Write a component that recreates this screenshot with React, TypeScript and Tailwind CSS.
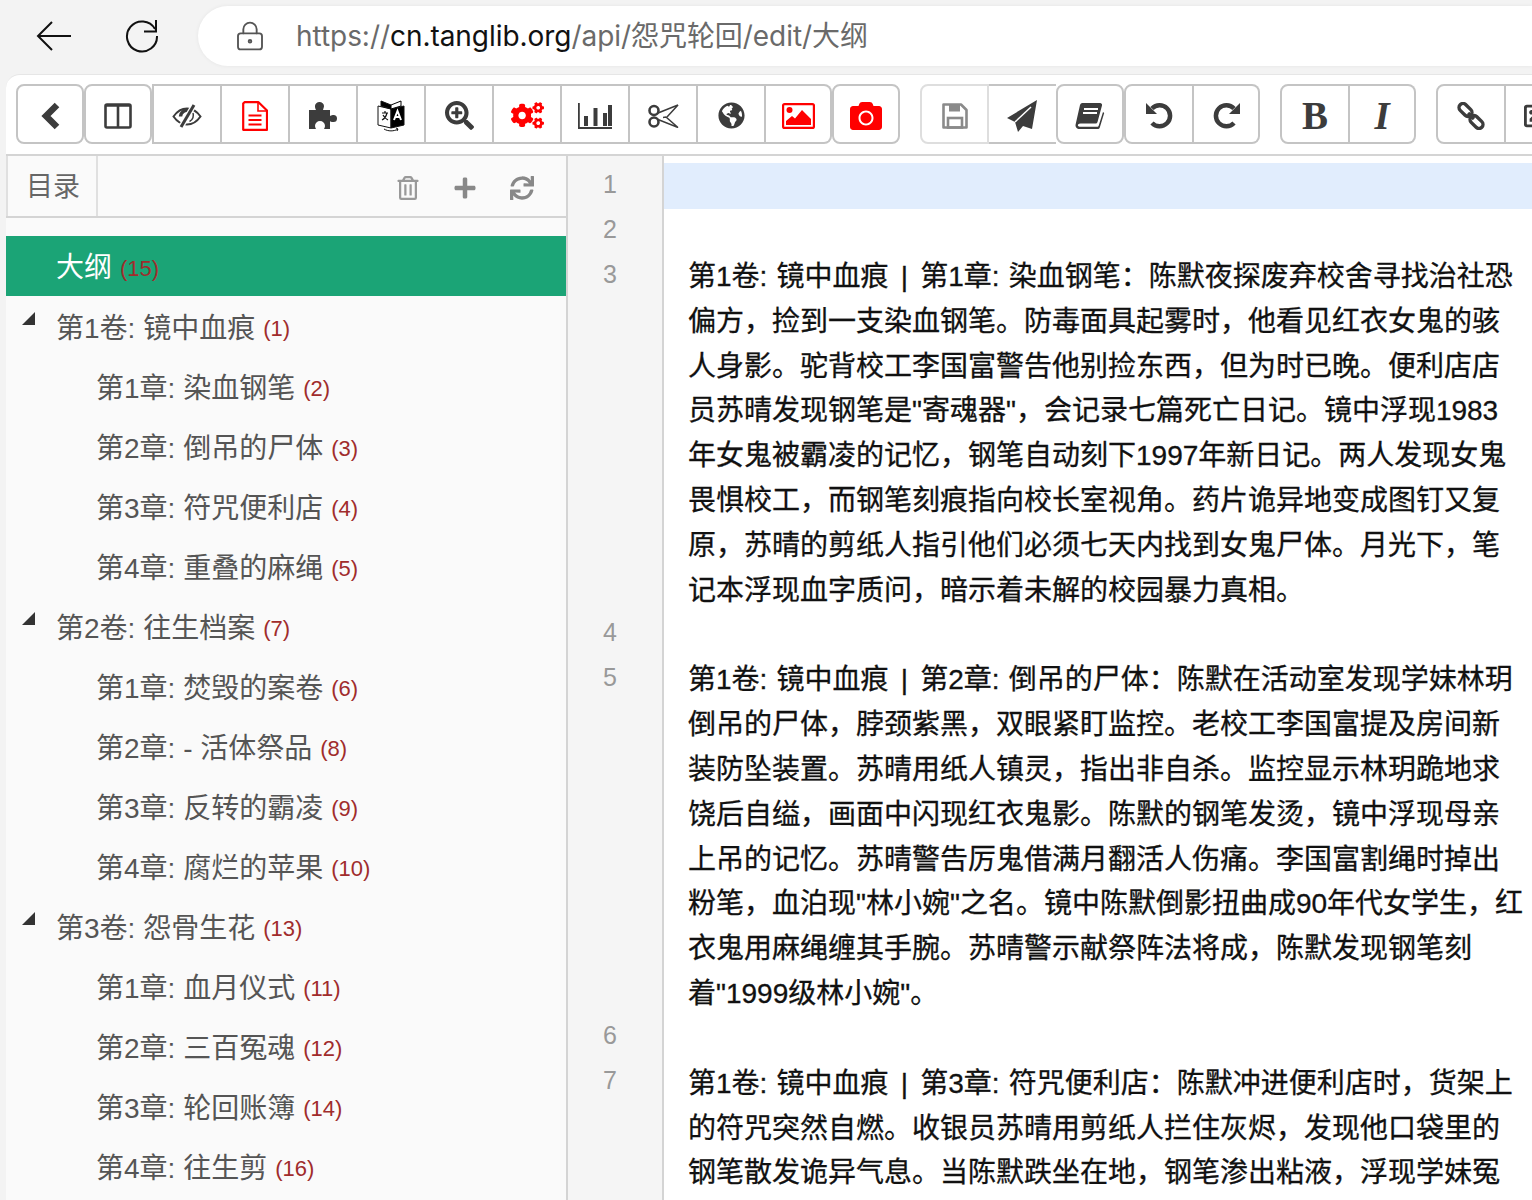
import { LockKeyhole } from "lucide-react";
import {
  FaPlus,
  FaSync,
  FaRegTrashAlt,
  FaSearchPlus,
  FaCogs,
  FaGlobeAmericas,
  FaCamera,
  FaRegImage,
} from "react-icons/fa";
import type { ReactNode } from "react";

const sans = "font-['Liberation_Sans','Noto_Sans_CJK_SC',sans-serif]";
const countCls = "ml-[8px] text-[22px] text-[#a02c2c]";

const tree = [
  { label: "第1卷: 镜中血痕", n: 1, level: 1 },
  { label: "第1章: 染血钢笔", n: 2, level: 2 },
  { label: "第2章: 倒吊的尸体", n: 3, level: 2 },
  { label: "第3章: 符咒便利店", n: 4, level: 2 },
  { label: "第4章: 重叠的麻绳", n: 5, level: 2 },
  { label: "第2卷: 往生档案", n: 7, level: 1 },
  { label: "第1章: 焚毁的案卷", n: 6, level: 2 },
  { label: "第2章: - 活体祭品", n: 8, level: 2 },
  { label: "第3章: 反转的霸凌", n: 9, level: 2 },
  { label: "第4章: 腐烂的苹果", n: 10, level: 2 },
  { label: "第3卷: 怨骨生花", n: 13, level: 1 },
  { label: "第1章: 血月仪式", n: 11, level: 2 },
  { label: "第2章: 三百冤魂", n: 12, level: 2 },
  { label: "第3章: 轮回账簿", n: 14, level: 2 },
  { label: "第4章: 往生剪", n: 16, level: 2 },
];

// each block: gutter numbers on the left, wrapped lines on the right
const paragraphs = [
  [
    "第1卷: 镜中血痕 | 第1章: 染血钢笔：陈默夜探废弃校舍寻找治社恐",
    "偏方，捡到一支染血钢笔。防毒面具起雾时，他看见红衣女鬼的骇",
    "人身影。驼背校工李国富警告他别捡东西，但为时已晚。便利店店",
    "员苏晴发现钢笔是\"寄魂器\"，会记录七篇死亡日记。镜中浮现1983",
    "年女鬼被霸凌的记忆，钢笔自动刻下1997年新日记。两人发现女鬼",
    "畏惧校工，而钢笔刻痕指向校长室视角。药片诡异地变成图钉又复",
    "原，苏晴的剪纸人指引他们必须七天内找到女鬼尸体。月光下，笔",
    "记本浮现血字质问，暗示着未解的校园暴力真相。",
  ],
  [
    "第1卷: 镜中血痕 | 第2章: 倒吊的尸体：陈默在活动室发现学妹林玥",
    "倒吊的尸体，脖颈紫黑，双眼紧盯监控。老校工李国富提及房间新",
    "装防坠装置。苏晴用纸人镇灵，指出非自杀。监控显示林玥跪地求",
    "饶后自缢，画面中闪现红衣鬼影。陈默的钢笔发烫，镜中浮现母亲",
    "上吊的记忆。苏晴警告厉鬼借满月翻活人伤痛。李国富割绳时掉出",
    "粉笔，血泊现\"林小婉\"之名。镜中陈默倒影扭曲成90年代女学生，红",
    "衣鬼用麻绳缠其手腕。苏晴警示献祭阵法将成，陈默发现钢笔刻",
    "着\"1999级林小婉\"。",
  ],
  [
    "第1卷: 镜中血痕 | 第3章: 符咒便利店：陈默冲进便利店时，货架上",
    "的符咒突然自燃。收银员苏晴用剪纸人拦住灰烬，发现他口袋里的",
    "钢笔散发诡异气息。当陈默跌坐在地，钢笔渗出粘液，浮现学妹冤",
  ],
];

function Btn({ children, className = "w-[68px]" }: { children: ReactNode; className?: string }) {
  return (
    <div className={`h-[60px] shrink-0 flex items-center justify-center pt-[3px] border-2 border-l-0 first:border-l-2 border-[#c4c4c4] bg-white text-[#3c3c3c] first:rounded-l-lg last:rounded-r-lg ${className}`}>
      {children}
    </div>
  );
}

function Group({ children, className = "" }: { children: ReactNode; className?: string }) {
  return <div className={`flex shrink-0 ${className}`}>{children}</div>;
}

function Gutter({ n }: { n: number }) {
  return <div className="h-[45px] leading-[45px] text-center text-[#999] text-[25px]">{n}</div>;
}

function Line({ text }: { text: string }) {
  const parts = text.split(" | ");
  if (parts.length === 1) return <div>{text}</div>;
  return (
    <div>
      {parts[0]} <span className="mx-[3px]">|</span> {parts[1]}
    </div>
  );
}

export default function App() {
  return (
    <div className={`w-[1532px] h-[1200px] overflow-hidden bg-[#f3f3f3] ${sans}`}>
      {/* browser bar */}
      <div className="h-[74px] flex items-center pb-[2px]">
        <svg className="ml-[36px]" width="36" height="32" viewBox="0 0 36 32" fill="none" stroke="#111" strokeWidth="2">
          <path d="M35 16H3M16 2L2 16l14 14" />
        </svg>
        <svg className="ml-[52px]" width="36" height="36" viewBox="0 0 36 36" fill="none" stroke="#111" strokeWidth="2">
          <path d="M31 11A15 15 0 1 0 33 18" />
          <path d="M32 2v11.5H20" />
        </svg>
        <div className="ml-[38px] flex-1 h-[60px] bg-white rounded-l-[30px] flex items-center shadow-[0_0_4px_rgba(0,0,0,0.06)]">
          <LockKeyhole className="ml-[36px] w-[32px] h-[32px] text-[#555]" strokeWidth={1.4} />
          <span className="ml-[30px] text-[28px] tracking-[-0.05px] text-[#6a6a6a] font-['Inter','Noto_Sans_CJK_SC',sans-serif]">
            https://<span className="text-[#111]">cn.tanglib.org</span>/api/怨咒轮回/edit/大纲
          </span>
        </div>
      </div>

      {/* app window */}
      <div className="ml-[6px] h-[1126px] bg-white rounded-tl-[14px] border-t border-[#e6e6e6] overflow-hidden">
        {/* toolbar */}
        <div className="h-[81px] flex items-start pt-[9px] pl-[10px] border-b-2 border-[#d4d4d4] overflow-hidden">
          <Group>
            <Btn>
              <svg width="19" height="28" viewBox="0 0 19 28" fill="none" stroke="#3c3c3c" strokeWidth="6.5">
                <path d="M16 3L5 14l11 11" />
              </svg>
            </Btn>
          </Group>
          <Group>
            <Btn>
              <svg width="28" height="26" viewBox="0 0 28 26" fill="none" stroke="#3c3c3c" strokeWidth="2.6">
                <rect x="1.5" y="1.5" width="25" height="23" rx="1.5" />
                <path d="M14 2v22M1.5 2.5h25" />
              </svg>
            </Btn>
          </Group>
          <Group>
            <Btn className="w-[70px] !rounded-none">
              <svg width="30" height="24" viewBox="0 0 30 24" fill="none" stroke="#3c3c3c">
                <path strokeWidth="2" d="M1.5 12.5C6 6 11 4.5 15 4.5s9 1.5 13.5 8C24 19 19 20.5 15 20.5S6 19 1.5 12.5z" />
                <path strokeWidth="3.5" d="M8.5 12.5a6.5 6.5 0 0 1 8-6" />
                <path strokeWidth="5.5" stroke="#fff" d="M22 1L9 23" />
                <path strokeWidth="3" d="M22 1L9 23" />
                <path strokeWidth="1.5" d="M21 9c1 3 0 7-3.5 8.5" />
              </svg>
            </Btn>
            <Btn>
              <svg width="26" height="30" viewBox="0 0 26 30" fill="none" stroke="#ff0000" strokeWidth="2.2">
                <path d="M2.5 1.2H16.5L25 9.5V28.8H1.2V2.5z" strokeLinejoin="round" />
                <path d="M16 1.5V10H25" strokeWidth="1.6" />
                <path d="M6.5 14.5h13M6.5 19h13M6.5 23.5h13" />
              </svg>
            </Btn>
            <Btn>
              <svg width="29" height="27" viewBox="0 0 29 27" fill="#3c3c3c">
                <path d="M0 8H7C6 6 6 5 6 4a4.5 4 0 0 1 9 0c0 1-.5 2-1 4H21V14c1.5-.6 2.5-.9 3.5-.9a3.5 3.5 0 0 1 0 7c-1 0-2-.3-3.5-.9V27H15c.5-1 1-2 1-3a5 5 0 0 0-10 0c0 1 .5 2 1 3H0z" />
              </svg>
            </Btn>
            <Btn>
              <svg width="28" height="32" viewBox="0 0 28 32" fill="none" stroke="#111">
                <path strokeWidth="1" fill="#fff" d="M1 6L14 9V28L1 25z" />
                <path strokeWidth="1" fill="#000" d="M14 9L27 6V25L14 28z" />
                <path strokeWidth="1" fill="#000" d="M4 1L14 5V9L4 6z" />
                <path strokeWidth="1" fill="#fff" stroke="#000" d="M24 1L14 5V9L24 6z" />
                <path strokeWidth="2" stroke="#fff" d="M17 20L20.5 11 24 20M18.3 17h4.4" />
                <path strokeWidth="1.2" d="M5 13h6M8 11v2M10 13c-1 4-3 6-5 7M6 15c1 2 3 4 5 5" />
                <path strokeWidth="1" d="M7 29c4 2.500 10 2.500 14 0M19 28l2 1-1 2" />
              </svg>
            </Btn>
            <Btn><FaSearchPlus size={29} /></Btn>
            <Btn><FaCogs size={33} className="text-[#ff0000]" /></Btn>
            <Btn>
              <svg width="34" height="26" viewBox="0 0 34 26" fill="#3c3c3c">
                <path d="M0 0h1.800v24H34v2H0z" />
                <rect x="6" y="13" width="4" height="10" />
                <rect x="15.500" y="5" width="4" height="18" />
                <rect x="25" y="10" width="4" height="13" />
                <rect x="30" y="2" width="4" height="21" />
              </svg>
            </Btn>
            <Btn>
              <svg width="32" height="24" viewBox="0 0 32 24" fill="none" stroke="#3c3c3c">
                <circle cx="7" cy="6.500" r="4.500" strokeWidth="2.600" />
                <circle cx="7" cy="18" r="4.500" strokeWidth="2.600" />
                <path strokeWidth="1.500" d="M11 9l20-8-11 12" />
                <path strokeWidth="1.500" d="M11 15.500l20 8-12-10.500-3 .5" />
              </svg>
            </Btn>
            <Btn><FaGlobeAmericas size={27} /></Btn>
            <Btn className="w-[66px]">
              <svg width="33" height="26" viewBox="0 0 33 26" fill="#ff0000">
                <rect x="1.100" y="1.100" width="30.800" height="23.800" rx="1.500" fill="none" stroke="#ff0000" strokeWidth="2.200" />
                <circle cx="7.500" cy="7" r="3" />
                <path d="M4 22v-4l6-5 3 2.500L20 7l9 9v6z" />
              </svg>
            </Btn>
          </Group>
          <Group>
            <Btn><FaCamera size={32} className="text-[#ff0000]" /></Btn>
          </Group>
          <Group className="ml-[20px]">
            <Btn className="w-[69px] !border-[#dedede]">
              <svg width="26" height="26" viewBox="0 0 26 26" fill="none" stroke="#8a8a8a" strokeWidth="2.600">
                <path d="M1.500 1.500H19L24.500 7V24.500H1.500z" strokeLinejoin="round" />
                <rect x="7" y="1.500" width="11" height="7" fill="#8a8a8a" strokeWidth="0" />
                <rect x="6" y="15" width="14" height="9.500" />
              </svg>
            </Btn>
            <Btn className="w-[67px] !rounded-none !border-r-0">
              <svg width="31" height="32" viewBox="0 0 31 32" fill="#3c3c3c">
                <path d="M30 0L0 18l8 4 3 10 5-6 9 3z" />
                <path d="M8 22L24 7" stroke="#fff" strokeWidth="1.500" />
              </svg>
            </Btn>
          </Group>
          <Group>
            <Btn>
              <svg width="30" height="28" viewBox="0 0 30 28" fill="#3c3c3c">
                <path d="M7 1h18a2 2 0 0 1 2 2.500L22.500 20a2 2 0 0 1-2 1.500H5.500c-2 0-3 1.200-2.500 2.200.4.800 1.400 1 2.500 1H22c1 0 1.500-.5 1.800-1.500L28 10l1.200 1-4.400 14.500c-.3 1-1.200 1.500-2.300 1.500H4.500C2 27 0 25 .6 22.500L5 3a2.500 2.500 0 0 1 2-2z" />
                <path d="M9 7h14M8 11h14" stroke="#fff" strokeWidth="2" />
              </svg>
            </Btn>
          </Group>
          <Group>
            <Btn className="w-[70px]"><Undo /></Btn>
            <Btn className="w-[66px]"><Undo className="-scale-x-100" /></Btn>
          </Group>
          <Group className="ml-[20px]">
            <Btn className="w-[70px]"><span className="text-[39px] leading-none font-bold font-['Liberation_Serif',serif]">B</span></Btn>
            <Btn className="w-[66px]"><span className="text-[39px] leading-none font-bold italic font-['Liberation_Serif',serif]">I</span></Btn>
          </Group>
          <Group className="ml-[20px]">
            <Btn className="w-[70px]">
              <svg width="28" height="28" viewBox="0 0 28 28" fill="none" stroke="#3c3c3c" strokeWidth="3.400">
                <rect x="1" y="4" width="15" height="8" rx="4" transform="rotate(45 8.500 8)" />
                <rect x="12" y="16" width="15" height="8" rx="4" transform="rotate(45 19.500 20)" />
                <path d="M11 11l6 6" />
              </svg>
            </Btn>
            <Btn><FaRegImage size={30} /></Btn>
          </Group>
        </div>

        <div className="flex h-[1046px]">
          {/* outline sidebar */}
          <aside className="w-[562px] shrink-0 bg-[#fafafa] border-r-2 border-[#d4d4d4]">
            <div className="h-[62px] flex items-center border-b-2 border-[#d4d4d4]">
              <div className="w-[92px] h-full flex items-center pl-[18px] pt-[2px] border-x-2 border-[#e0e0e0] text-[27px] text-[#666]">目录</div>
              <div className="flex-1 flex items-center justify-end pt-[3px] pr-[32px] gap-[33px] text-[#888]">
                <FaRegTrashAlt size={24} className="text-[#999]" />
                <FaPlus size={24} />
                <FaSync size={24} />
              </div>
            </div>
            <div className="h-[18px]" />
            <div className="h-[60px] bg-[#1ba476] flex items-center pl-[50px] pt-[4px] text-[28px] text-white">
              大纲<span className={countCls}>(15)</span>
            </div>
            {tree.map((t) => (
              <div key={t.label + t.n} className={`relative h-[60px] flex items-center pt-[5px] text-[28px] text-[#555] ${t.level === 1 ? "pl-[50px]" : "pl-[90px]"}`}>
                {t.level === 1 && (
                  <div className="absolute left-[16px] top-[16px] w-0 h-0 border-l-[13px] border-l-transparent border-b-[13px] border-b-[#333]" />
                )}
                {t.label}
                <span className={countCls}>({t.n})</span>
              </div>
            ))}
          </aside>

          {/* gutter and text */}
          <div className="w-[96px] shrink-0 bg-[#f5f5f5] border-r-2 border-[#d4d4d4] pt-[6px] pr-[10px]">
            <Gutter n={1} />
            <Gutter n={2} />
            <Gutter n={3} />
            <div className="h-[313px]" />
            <Gutter n={4} />
            <Gutter n={5} />
            <div className="h-[313px]" />
            <Gutter n={6} />
            <Gutter n={7} />
          </div>
          <main className="flex-1 min-w-0 pt-[7px]">
            <div className="h-[46px] bg-[#e1edfd]" />
            <div className="h-[46px]" />
            {paragraphs.map((p, i) => (
              <div key={i} className="mb-[45px] pl-[24px] text-[28px] leading-[44.8px] text-[#111] whitespace-nowrap [word-spacing:1.4px] [-webkit-text-stroke:0.3px_#111]">
                {p.map((line) => (
                  <Line key={line} text={line} />
                ))}
              </div>
            ))}
          </main>
        </div>
      </div>
    </div>
  );
}

function Undo({ className = "" }: { className?: string }) {
  return (
    <svg className={className} width="27" height="27" viewBox="0 0 27 27" fill="none" stroke="#3c3c3c" strokeWidth="4.500">
      <path d="M6 6.500A10.500 10.500 0 1 1 6 21" />
      <path fill="#3c3c3c" stroke="none" d="M0 1v11h11z" />
    </svg>
  );
}
